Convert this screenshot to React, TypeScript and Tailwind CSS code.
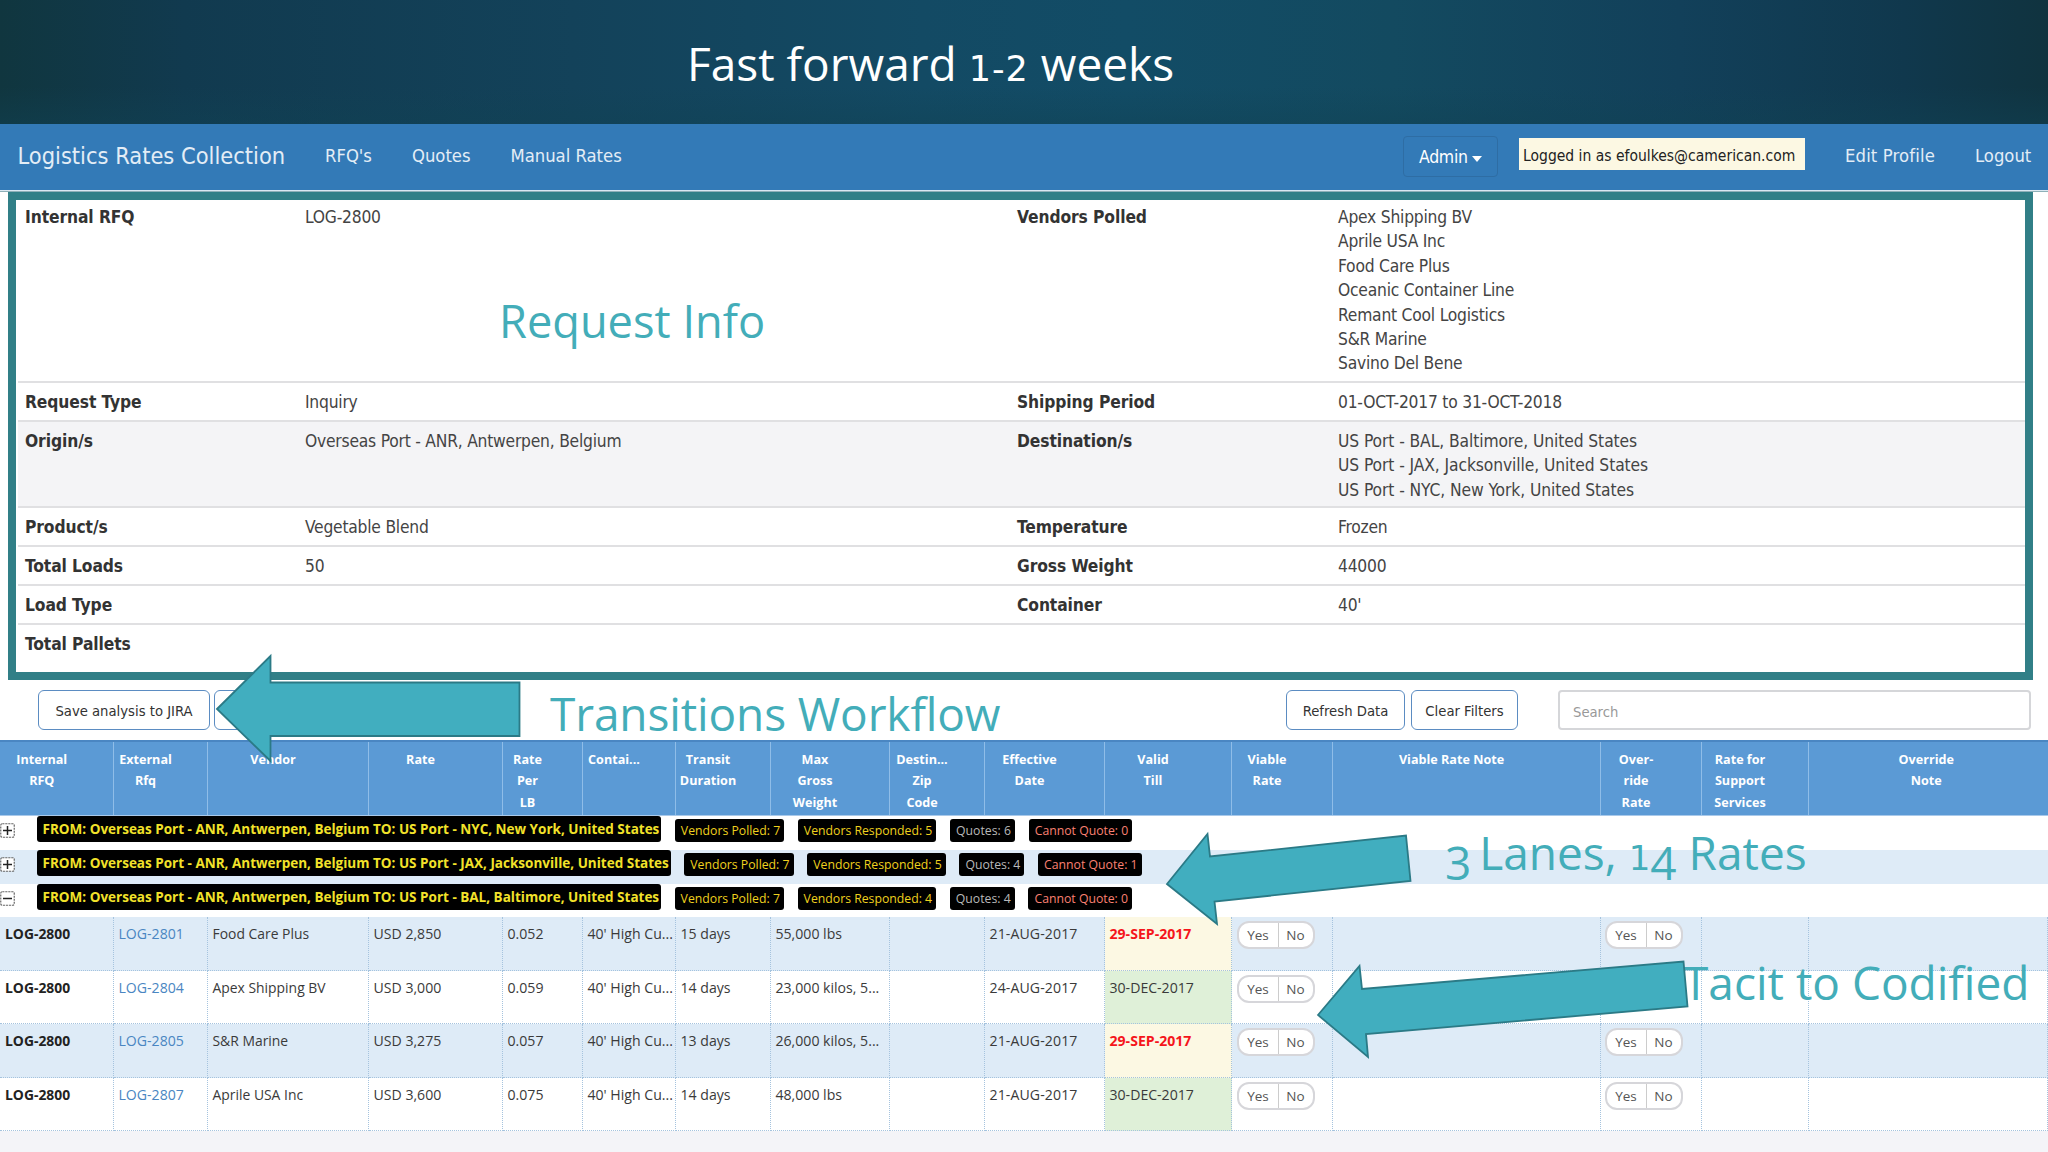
import clsx from "clsx";

const infoRows = [
  {
    height: "h-[183px] pt-[5px]",
    label: "Internal RFQ",
    value: "LOG-2800",
    label2: "Vendors Polled",
    values2: [
      "Apex Shipping BV",
      "Aprile USA Inc",
      "Food Care Plus",
      "Oceanic Container Line",
      "Remant Cool Logistics",
      "S&R Marine",
      "Savino Del Bene",
    ],
  },
  {
    height: "h-[39px] pt-[7px]",
    label: "Request Type",
    value: "Inquiry",
    label2: "Shipping Period",
    values2: ["01-OCT-2017 to 31-OCT-2018"],
  },
  {
    height: "h-[86px] pt-[7px]",
    label: "Origin/s",
    value: "Overseas Port - ANR, Antwerpen, Belgium",
    label2: "Destination/s",
    values2: [
      "US Port - BAL, Baltimore, United States",
      "US Port - JAX, Jacksonville, United States",
      "US Port - NYC, New York, United States",
    ],
    shaded: true,
  },
  { height: "h-[39px] pt-[7px]", label: "Product/s", value: "Vegetable Blend", label2: "Temperature", values2: ["Frozen"] },
  { height: "h-[39px] pt-[7px]", label: "Total Loads", value: "50", label2: "Gross Weight", values2: ["44000"] },
  { height: "h-[39px] pt-[7px]", label: "Load Type", value: "", label2: "Container", values2: ["40'"] },
  { height: "h-[46px] pt-[7px]", label: "Total Pallets", value: "", label2: "", values2: [], last: true },
];

const columns = [
  ["Internal", "RFQ"],
  ["External", "Rfq"],
  ["Vendor"],
  ["Rate"],
  ["Rate", "Per", "LB"],
  ["Contai..."],
  ["Transit", "Duration"],
  ["Max", "Gross", "Weight"],
  ["Destin...", "Zip", "Code"],
  ["Effective", "Date"],
  ["Valid", "Till"],
  ["Viable", "Rate"],
  ["Viable Rate Note"],
  ["Over-", "ride", "Rate"],
  ["Rate for", "Support", "Services"],
  ["Override", "Note"],
];

const gridCols =
  "grid grid-cols-[113.5px_94px_161px_134px_80px_93px_95px_119px_95px_120px_127px_101px_268px_101px_107px_239.5px]";

const lanes = [
  { to: "US Port - NYC, New York, United States", polled: 7, responded: 5, quotes: 6, cannot: 0, open: false },
  { to: "US Port - JAX, Jacksonville, United States", polled: 7, responded: 5, quotes: 4, cannot: 1, open: false },
  { to: "US Port - BAL, Baltimore, United States", polled: 7, responded: 4, quotes: 4, cannot: 0, open: true },
];

const rates = [
  { ext: "LOG-2801", vendor: "Food Care Plus", rate: "USD 2,850", perLb: "0.052", transit: "15 days", weight: "55,000 lbs", effective: "21-AUG-2017", till: "29-SEP-2017", expired: true },
  { ext: "LOG-2804", vendor: "Apex Shipping BV", rate: "USD 3,000", perLb: "0.059", transit: "14 days", weight: "23,000 kilos, 5...", effective: "24-AUG-2017", till: "30-DEC-2017", expired: false },
  { ext: "LOG-2805", vendor: "S&R Marine", rate: "USD 3,275", perLb: "0.057", transit: "13 days", weight: "26,000 kilos, 5...", effective: "21-AUG-2017", till: "29-SEP-2017", expired: true },
  { ext: "LOG-2807", vendor: "Aprile USA Inc", rate: "USD 3,600", perLb: "0.075", transit: "14 days", weight: "48,000 lbs", effective: "21-AUG-2017", till: "30-DEC-2017", expired: false },
];

function TitleBar() {
  return (
    <header className="h-[124px] bg-[linear-gradient(to_bottom,transparent_70%,rgba(16,66,84,0.45)),linear-gradient(to_right,#10363f_0%,#113a4f_9%,#13425a_28%,#134a64_45%,#124c66_55%,#134a60_68%,#12405a_82%,#10384d_93%,#10333f_100%)]">
      <h1 className="pt-[40px] pl-[687px] text-[46px] leading-none whitespace-nowrap text-white">
        Fast forward{" "}
        <span className="font-['DejaVu_Sans',sans-serif] text-[35px] tracking-[1px]">1-2</span>{" "}
        weeks
      </h1>
    </header>
  );
}

function Navbar() {
  return (
    <nav className="flex h-[66px] items-start bg-[#337ab7] font-['DejaVu_Sans_Condensed','DejaVu_Sans',sans-serif] whitespace-nowrap text-[#e3edf6]">
      <div className="w-[325px] pt-[16px] pl-[17.5px] text-[23.4px] leading-[32px]">Logistics Rates Collection</div>
      <div className="w-[87px] pt-[16px] text-[18.3px] leading-[32px]">RFQ's</div>
      <div className="w-[98.5px] pt-[16px] text-[18.3px] leading-[32px]">Quotes</div>
      <div className="pt-[16px] text-[18.3px] leading-[32px]">Manual Rates</div>
      <button className="mt-[12px] ml-auto flex h-[41px] w-[95px] items-center rounded border border-[#2e6da4] pt-[2px] pl-[15px] text-[17.5px] tracking-[-0.3px] text-white">
        Admin
        <span className="mt-[3px] ml-[4px] border-x-[5px] border-t-[6px] border-x-transparent border-t-white" />
      </button>
      <div className="mt-[14px] ml-[21px] flex h-[32px] w-[286px] items-center bg-[#fcf8e3] pt-[6px] pl-[4px] text-[15.5px] text-[#222]">
        Logged in as efoulkes@camerican.com
      </div>
      <div className="ml-[40px] w-[130px] pt-[16px] text-[18.3px] leading-[32px] tracking-[0.15px]">Edit Profile</div>
      <div className="w-[73px] pt-[16px] text-[18.3px] leading-[32px]">Logout</div>
    </nav>
  );
}

function RequestInfo() {
  return (
    <section className="mr-[15px] ml-[8px] h-[488px] border-8 border-[#317f87] bg-white pl-[2px] font-['DejaVu_Sans_Condensed','DejaVu_Sans',sans-serif] text-[17.3px] leading-[24.4px] tracking-[-0.22px] text-[#444]">
      {infoRows.map((row) => (
        <div
          key={row.label}
          className={clsx(
            "grid grid-cols-[280px_712px_321px_1fr] pl-[7px]",
            row.height,
            !row.last && "border-b-2 border-[#e0e0e2]",
            row.shaded && "bg-[#f4f4f6]"
          )}
        >
          <div className="font-bold tracking-[-0.1px] text-[#333]">{row.label}</div>
          <div>{row.value}</div>
          <div className="font-bold tracking-[-0.1px] text-[#333]">{row.label2}</div>
          <div className={clsx(row.shaded && "tracking-[-0.09px]")}>
            {row.values2.map((v) => (
              <div key={v}>{v}</div>
            ))}
          </div>
        </div>
      ))}
    </section>
  );
}

function Toolbar() {
  const button = "h-[40px] rounded-[6px] border-[1.5px] border-[#5b8cc2] bg-white pt-[2px] text-[14.7px] text-[#333]";
  return (
    <div className="flex h-[60px] items-start pt-[10px] pr-[17px] pl-[38px] font-['DejaVu_Sans_Condensed','DejaVu_Sans',sans-serif]">
      <button className={clsx(button, "w-[172px]")}>Save analysis to JIRA</button>
      <button className={clsx(button, "ml-[4px] w-[150px]")} />
      <button className={clsx(button, "ml-auto w-[119px]")}>Refresh Data</button>
      <button className={clsx(button, "ml-[6px] w-[107px]")}>Clear Filters</button>
      <input
        placeholder="Search"
        className="ml-[40px] h-[40px] w-[473px] rounded-[4px] border-2 border-[#d5d6d9] bg-white px-[13px] pt-[2px] text-[14.7px] placeholder:text-[#999]"
      />
    </div>
  );
}

function YesNo() {
  return (
    <div className="mt-[4px] flex h-[28px] w-[78px] rounded-[12px] border-2 border-[#d6d6da] bg-white text-[13.5px] leading-[25px] text-[#555]">
      <div className="w-[40px] border-r border-[#ccc] text-center">Yes</div>
      <div className="flex-1 text-center">No</div>
    </div>
  );
}

function ExpandIcon({ open }: { open: boolean }) {
  return (
    <svg viewBox="0 0 15 15" className="h-[15px] w-[15px] shrink-0">
      <rect x="0.75" y="0.75" width="13.5" height="13.5" rx="1.5" fill="#fff" stroke="#666" strokeWidth="1.2" strokeDasharray="2.2 0.8" />
      <path d={open ? "M3 7.5H12" : "M3 7.5H12M7.5 3V12"} stroke="#222" strokeWidth="1.5" />
    </svg>
  );
}

function RatesGrid() {
  const badge = "h-[23px] rounded-[3px] bg-black pr-[4px] pl-[6px] text-[12.25px] leading-[23px]";
  return (
    <section className="overflow-hidden whitespace-nowrap">
      <div className={clsx(gridCols, "h-[76px] border-t-2 border-b border-t-[#4a86c2] border-b-[#a9c9ea] bg-[#5b9ad5]")}>
        {columns.map((lines, i) => (
          <div
            key={i}
            className={clsx(
              "pt-[7px] text-center text-[12.6px] leading-[21.4px] font-bold text-white",
              i < columns.length - 1 ? "border-r border-[#8fbde8] pr-[29px]" : "pr-[4px]"
            )}
          >
            {lines.map((line) => (
              <div key={line} className="flex justify-center">
                {line}
              </div>
            ))}
          </div>
        ))}
      </div>

      {lanes.map((lane, i) => (
        <div
          key={lane.to}
          className={clsx("flex items-start", i === 2 ? "h-[33px]" : "h-[34px]", i % 2 ? "bg-[#deebf7]" : "bg-white")}
        >
          <div className="w-[36.5px] pt-[7px]">
            <ExpandIcon open={lane.open} />
          </div>
          <div className="h-[26px] rounded-[3px] bg-black pr-[2px] pl-[6px] text-[13.5px] leading-[26px] font-bold text-[#f2e22a]">
            FROM: Overseas Port - ANR, Antwerpen, Belgium TO: {lane.to}
          </div>
          <div className="ml-[13.5px] flex gap-[13.7px] pt-[2.5px]">
            <div className={clsx(badge, "text-[#f0d21e]")}>Vendors Polled: {lane.polled}</div>
            <div className={clsx(badge, "text-[#f0d21e]")}>Vendors Responded: {lane.responded}</div>
            <div className={clsx(badge, "text-[#b9b9b9]")}>Quotes: {lane.quotes}</div>
            <div className={clsx(badge, "text-[#fa8072]")}>Cannot Quote: {lane.cannot}</div>
          </div>
        </div>
      ))}

      {rates.map((r, i) => {
        const cell = "border-r border-b border-dotted border-[#a5c3de] pt-[6px] pl-[5px]";
        return (
          <div
            key={r.ext}
            className={clsx(gridCols, "h-[53.5px] text-[14.1px] leading-[22px] text-[#3a3a3a]", i % 2 ? "bg-white" : "bg-[#deebf7]")}
          >
            <div className={clsx(cell, "text-[13.9px] font-bold text-[#222]")}>LOG-2800</div>
            <div className={clsx(cell, "text-[#4a86c2]")}>{r.ext}</div>
            <div className={clsx(cell, "text-[13.9px]")}>{r.vendor}</div>
            <div className={cell}>{r.rate}</div>
            <div className={cell}>{r.perLb}</div>
            <div className={cell}>40' High Cu...</div>
            <div className={cell}>{r.transit}</div>
            <div className={cell}>{r.weight}</div>
            <div className={cell} />
            <div className={clsx(cell, "tracking-[0.1px]")}>{r.effective}</div>
            <div className={clsx(cell, r.expired ? "bg-[#fcf8e3] font-bold text-[#f5151b]" : "bg-[#dff0d8]")}>{r.till}</div>
            <div className="border-r border-b border-dotted border-[#a5c3de] pl-[5px]">
              <YesNo />
            </div>
            <div className={cell} />
            <div className="border-r border-b border-dotted border-[#a5c3de] pl-[4px]">
              <YesNo />
            </div>
            <div className={cell} />
            <div className={cell} />
          </div>
        );
      })}
    </section>
  );
}

// Callouts float over the page
function Callouts() {
  const text = "absolute leading-none whitespace-nowrap text-[#43adb9]";
  return (
    <div className="pointer-events-none absolute inset-0">
      <div className={clsx(text, "top-[298px] left-[499px] text-[45.2px]")}>Request Info</div>
      <div className={clsx(text, "top-[690px] left-[550px] text-[46px] tracking-[-0.12px]")}>Transitions Workflow</div>
      <div className={clsx(text, "top-[829px] left-[1445px] text-[46px]")}>
        <span className="relative top-[10px] mr-[-4px]">3</span> Lanes,{" "}
        <span className="font-['DejaVu_Sans',sans-serif] text-[34px]">1</span>
        <span className="relative top-[10px]">4</span> Rates
      </div>
      <div className={clsx(text, "top-[959px] left-[1683px] text-[46px]")}>Tacit to Codified</div>
      <svg viewBox="0 0 2048 1152" className="absolute inset-0 h-full w-full">
        <g fill="#41aebf" stroke="#2b7a86" strokeWidth="1.8">
          <path d="M217 709L270.5 656V682.5H519.5V736H270.5V761Z" />
          <path d="M1167 884L1207.5 834L1210 856.5L1406 835.5L1410.5 881L1214.5 901.5L1217 924Z" />
          <path d="M1318 1015L1359.5 966L1362 989L1683.5 961.5L1687.5 1006.5L1366 1034L1368 1057Z" />
        </g>
      </svg>
    </div>
  );
}

export default function App() {
  return (
    <div className="relative h-[1152px] w-[2048px] overflow-hidden bg-[#f4f4f8] font-['Open_Sans',sans-serif]">
      <TitleBar />
      <Navbar />
      <div className="bg-white">
        <div className="h-[2px] border-t border-[#dbe8f2] bg-[#8fb0b8]" />
        <RequestInfo />
        <Toolbar />
        <RatesGrid />
      </div>
      <Callouts />
    </div>
  );
}
